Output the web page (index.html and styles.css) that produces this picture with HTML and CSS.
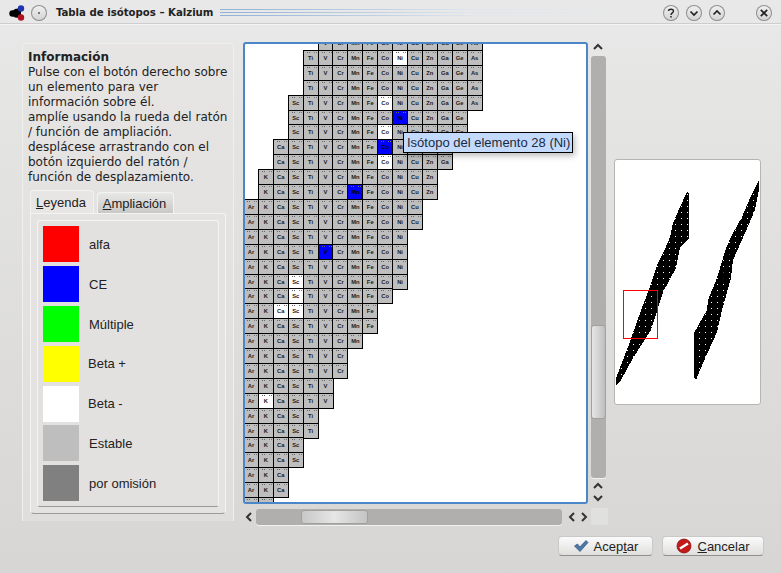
FILE: index.html
```html
<!DOCTYPE html>
<html lang="es">
<head>
<meta charset="utf-8">
<title>Tabla de isótopos – Kalzium</title>
<link rel="stylesheet" href="styles.css">
</head>
<body>
<div class="window">
  <header class="titlebar">
    <svg class="app-icon" width="18" height="18" viewBox="0 0 18 18">
      <path d="M2.5 9.5 L8 5 L14 4 L14 14 L8 13.5 Z" fill="#000"/>
      <circle cx="5.5" cy="9.5" r="3.2" fill="#000"/>
      <circle cx="14" cy="4.5" r="3.2" fill="#2233b0"/>
      <circle cx="14" cy="13.5" r="3.2" fill="#b01020"/>
    </svg>
    <span class="wbtn wbtn-menu"><svg width="16" height="16" viewBox="0 0 16 16"><circle cx="8" cy="8" r="1" fill="#555"/></svg></span>
    <h1 class="title">Tabla de isótopos – Kalzium</h1>
    <span class="title-lines"></span>
    <span class="wbtn"><svg width="16" height="16" viewBox="0 0 16 16"><path d="M5.5 6 C5.5 3.6 10.5 3.6 10.5 6 C10.5 8 8 7.8 8 10" fill="none" stroke="#222" stroke-width="1.4"/><rect x="7.3" y="11" width="1.4" height="1.6" fill="#222"/></svg></span>
    <span class="wbtn"><svg width="16" height="16" viewBox="0 0 16 16"><path d="M4.5 6.5 L8 10 L11.5 6.5" fill="none" stroke="#222" stroke-width="1.7"/></svg></span>
    <span class="wbtn"><svg width="16" height="16" viewBox="0 0 16 16"><path d="M4.5 9.5 L8 6 L11.5 9.5" fill="none" stroke="#222" stroke-width="1.7"/></svg></span>
    <span class="wbtn wbtn-close"><svg width="16" height="16" viewBox="0 0 16 16"><path d="M4.8 4.8 L11.2 11.2 M11.2 4.8 L4.8 11.2" fill="none" stroke="#222" stroke-width="1.7"/></svg></span>
  </header>

  <main class="content">
    <aside class="info-panel">
      <div class="info-text">
        <strong>Información</strong><br>
        Pulse con el botón derecho sobre<br>
        un elemento para ver<br>
        información sobre él.<br>
        amplíe usando la rueda del ratón<br>
        / función de ampliación.<br>
        desplácese arrastrando con el<br>
        botón izquierdo del ratón /<br>
        función de desplazamiento.
      </div>
      <div class="tabs">
        <span class="tab tab-active"><u>L</u>eyenda</span>
        <span class="tab"><u>A</u>mpliación</span>
      </div>
      <div class="tab-pane">
        <ul class="legend">
          <li class="legend-row"><span class="swatch sw-red"></span><span class="legend-label">alfa</span></li>
          <li class="legend-row"><span class="swatch sw-blue"></span><span class="legend-label">CE</span></li>
          <li class="legend-row"><span class="swatch sw-green"></span><span class="legend-label">Múltiple</span></li>
          <li class="legend-row"><span class="swatch sw-yellow"></span><span class="legend-label legend-label-tight">Beta +</span></li>
          <li class="legend-row legend-row-short"><span class="swatch sw-white"></span><span class="legend-label legend-label-tight">Beta -</span></li>
          <li class="legend-row"><span class="swatch sw-silver"></span><span class="legend-label">Estable</span></li>
          <li class="legend-row"><span class="swatch sw-gray"></span><span class="legend-label">por omisión</span></li>
        </ul>
      </div>
    </aside>

    <section class="table-area">
      <div class="viewport"><div id="isotopes" class="isotopes"></div></div>
      <div class="tooltip">Isótopo del elemento 28 (Ni)</div>

      <div class="vscroll">
        <svg class="arrow" width="14" height="8" viewBox="0 0 14 8"><path d="M3 6 L7 2 L11 6" fill="none" stroke="#333" stroke-width="2"/></svg>
        <div class="vgroove"><div class="vslider"></div></div>
        <div class="arrow-pair-v">
          <svg class="arrow" width="14" height="8" viewBox="0 0 14 8"><path d="M3 6 L7 2 L11 6" fill="none" stroke="#333" stroke-width="2"/></svg>
          <svg class="arrow" width="14" height="8" viewBox="0 0 14 8"><path d="M3 2 L7 6 L11 2" fill="none" stroke="#333" stroke-width="2"/></svg>
        </div>
      </div>

      <div class="hscroll">
        <svg class="arrow" width="8" height="14" viewBox="0 0 8 14"><path d="M6 3 L2 7 L6 11" fill="none" stroke="#333" stroke-width="2"/></svg>
        <div class="hgroove"><div class="hslider"></div></div>
        <div class="arrow-pair-h">
          <svg class="arrow" width="8" height="14" viewBox="0 0 8 14"><path d="M6 3 L2 7 L6 11" fill="none" stroke="#333" stroke-width="2"/></svg>
          <svg class="arrow" width="8" height="14" viewBox="0 0 8 14"><path d="M2 3 L6 7 L2 11" fill="none" stroke="#333" stroke-width="2"/></svg>
        </div>
      </div>
      <div class="corner"></div>
    </section>

    <figure class="preview">
      <svg class="minimap" width="143" height="242" viewBox="616 161 143 242" shape-rendering="crispEdges">
        <defs>
          <pattern id="dots" patternUnits="userSpaceOnUse" x="3" y="2" width="6" height="6">
            <rect width="1" height="1" fill="#fff"/>
          </pattern>
          <polygon id="left" points="687,192 689,193 689,238 680,248 676,268 663,292 651,330 633,358 621,380 616,386 616,378 628,347 640,313 650,287 658,263 665,249 670,237 673,223 680,207"/>
          <polygon id="right" points="759,180 759,190 755,210 745,233 733,260 731,278 722,310 717,332 703,363 696,380 694,378 694,333 707,310 708,300 717,278 726,248 733,233 742,217 750,198"/>
        </defs>
        <use href="#left" fill="#000"/>
        <use href="#right" fill="#000"/>
        <use href="#left" fill="url(#dots)"/>
        <use href="#right" fill="url(#dots)"/>
        <rect x="729" y="254" width="1" height="1" fill="#f00"/>
        <rect x="723" y="272" width="1" height="1" fill="#f00"/>
        <rect x="723" y="278" width="1" height="1" fill="#00f"/>
        <path d="M623 290h35v49h-35z M624 291v47h33v-47z" fill="#ff0000" fill-rule="evenodd"/>
      </svg>
    </figure>
  </main>

  <footer class="footer">
    <button class="btn btn-ok" type="button">
      <svg width="16" height="16" viewBox="0 0 16 16"><path d="M1.5 8 L4.5 6 L6.8 9 L13 2.5 L15 4.5 L7 13.5 Z" fill="#4d78a8" stroke="#2c4f78" stroke-width=".7"/></svg>
      <span>Acep<u>t</u>ar</span>
    </button>
    <button class="btn btn-cancel" type="button">
      <svg width="16" height="16" viewBox="0 0 16 16"><circle cx="8" cy="8" r="7" fill="#c21a1a" stroke="#8a1010" stroke-width=".8"/><path d="M4 10.5 L12 5.5" stroke="#fff" stroke-width="2.6"/></svg>
      <span><u>C</u>ancelar</span>
    </button>
  </footer>
</div>
<script src="script.js"></script>
</body>
</html>
```
FILE: styles.css
```css
* { box-sizing: border-box; }
html, body { margin: 0; padding: 0; }
body { width: 781px; height: 573px; overflow: hidden; }

.window {
  width: 781px;
  height: 573px;
  display: flex;
  flex-direction: column;
  background: linear-gradient(#e9e9e9 0, #e4e4e3 120px, #d7d6d5 100%);
  font-family: "Liberation Sans", Arial, sans-serif;
  font-size: 13px;
  color: #222;
}

/* Title bar */
.titlebar {
  height: 24px;
  flex: none;
  display: flex;
  align-items: center;
  padding: 2px 9px 0 7px;
  background: #e8e8e8;
  border-bottom: 1px solid #cdcdcd;
  box-shadow: 0 1px 0 #f4f4f4;
  border-radius: 4px 4px 0 0;
}
.app-icon { flex: none; margin-right: 5px; }
.wbtn {
  width: 16px;
  height: 16px;
  flex: none;
  border-radius: 50%;
  background: linear-gradient(#f2f2f2, #d2d2d2);
  box-shadow: inset 0 0 0 1px #8f8f8f;
  margin-left: 7px;
  display: block;
}
.wbtn svg { display: block; }
.wbtn-menu { margin-left: 1px; }
.wbtn-close { margin-left: 31px; }
.title {
  margin: 0 0 0 9px;
  font-family: "DejaVu Sans", sans-serif;
  font-size: 11.3px;
  font-stretch: condensed;
  font-weight: bold;
  color: #222;
  white-space: nowrap;
}
.title-lines {
  flex: 1;
  height: 7px;
  margin: 0 12px 0 7px;
  background:
    linear-gradient(90deg, #8fb0d8, #dfe6ee 60%, #e8e8e8 95%) 0 0 / 100% 1px no-repeat,
    linear-gradient(90deg, #8fb0d8, #dfe6ee 60%, #e8e8e8 95%) 0 3px / 100% 1px no-repeat,
    linear-gradient(90deg, #8fb0d8, #dfe6ee 60%, #e8e8e8 95%) 0 6px / 100% 1px no-repeat;
}

/* Main columns */
.content {
  flex: none;
  height: 498px;
  padding: 18px 0 0 22px;
  display: flex;
  align-items: flex-start;
}

/* Left panel */
.info-panel {
  width: 212px;
  height: 478px;
  margin-top: 1px;
  flex: none;
  padding: 6px 8px 0 8px;
  border: 1px solid #f0f0ef;
  border-bottom: 0;
  border-radius: 4px 4px 0 0;
  background: linear-gradient(#e6e5e4, #dfdedd);
}
.info-text {
  margin-left: -3px;
  width: 206px;
  font-family: "DejaVu Sans", sans-serif;
  font-size: 12px;
  line-height: 15px;
  white-space: nowrap;
}
.tabs {
  display: flex;
  align-items: flex-end;
  height: 23px;
  margin: 5px 0 0 -1px;
  gap: 3px;
}
.tab {
  height: 21px;
  width: 77px;
  padding: 3px 2px 0 0;
  text-align: center;
  border: 1px solid #f3f3f2;
  border-bottom: 0;
  border-radius: 4px 4px 0 0;
  background: linear-gradient(#e8e8e7, #c9c8c7);
}
.tab-active {
  height: 23px;
  width: 64px;
  padding-top: 4px;
  background: #e7e6e5;
}
.tab-pane {
  width: 196px;
  height: 301px;
  margin-left: -1px;
  padding: 6px;
  border: 1px solid #f3f3f2;
  border-bottom: 1px solid #9a9a9a;
  border-radius: 0 3px 4px 4px;
  background: #e4e3e2;
}
.legend {
  list-style: none;
  margin: 0;
  height: 287px;
  padding: 5px 0 0 5px;
  border: 1px solid #f5f5f4;
  border-bottom: 1px solid #9a9a9a;
  border-radius: 3px;
  background: #e2e1e0;
}
.legend-row {
  height: 40px;
  display: flex;
  align-items: flex-start;
  gap: 10px;
}
.legend-row-short { height: 39px; }
.swatch { width: 36px; height: 36px; flex: none; }
.legend-label { padding-top: 11px; line-height: 16px; }
.legend-label-tight { margin-left: -1px; padding-top: 10px; }
.sw-red { background: #f00; }
.sw-blue { background: #00f; }
.sw-green { background: #0f0; }
.sw-yellow { background: #ff0; }
.sw-white { background: #fff; }
.sw-silver { background: #bebebe; }
.sw-gray { background: #808080; }

/* Table and scroll bars */
.table-area {
  position: relative;
  flex: none;
  width: 366px;
  margin-left: 9px;
  display: grid;
  grid-template-columns: 345px 21px;
  grid-template-rows: 462px 21px;
}
.viewport {
  overflow: hidden;
  border: 2px solid #4a86c8;
  border-radius: 3px;
  background: #fff;
}
.isotopes {
  display: grid;
  grid-template-columns: repeat(16, 14.92px);
  grid-auto-rows: 14.92px;
  margin: -9px 0 0 -2px;
  font-family: "Liberation Sans", sans-serif;
}
.cell {
  width: 16px;
  height: 16px;
  border: 1px solid #000;
  padding-top: 4px;
  font-size: 5.8px;
  line-height: 7px;
  font-weight: bold;
  text-align: center;
  color: #1a1a1a;
  background-color: #bebebe;
  background-image:
    linear-gradient(#666, #666), linear-gradient(#666, #666),
    linear-gradient(#777, #777), linear-gradient(#777, #777);
  background-size: 1px 1px;
  background-repeat: no-repeat;
  background-position: 3px 1px, 5px 1px, 10px 1px, 12px 1px;
}
.cell-white { background-color: #fff; }
.cell-blue { background-color: #00f; color: #000; }

.tooltip {
  position: absolute;
  left: 160px;
  top: 90px;
  width: 170px;
  height: 21px;
  border: 1px solid #000;
  background: #c3dafc;
  color: #1b2a3c;
  line-height: 20px;
  padding-left: 3px;
  white-space: nowrap;
  box-shadow: 2px 3px 6px rgba(0, 0, 0, .25);
}

.arrow { display: block; flex: none; }
.vscroll {
  display: flex;
  flex-direction: column;
  align-items: center;
  padding: 0 3px 0 2px;
}
.vscroll > .arrow { margin-top: 1px; }
.vgroove {
  width: 15px;
  height: 422px;
  margin-top: 5px;
  flex: none;
  padding-top: 269px;
  border-radius: 3px;
  background: #b0afae;
  box-shadow: 0 1px 0 #f2f2f2;
}
.vslider {
  height: 94px;
  border-radius: 3px;
  border: 1px solid #a0a0a0;
  background: linear-gradient(90deg, #e6e6e6, #cfcfcf 60%, #bdbdbd);
}
.arrow-pair-v { display: flex; flex-direction: column; gap: 4px; margin-top: 4px; }

.hscroll {
  display: flex;
  align-items: center;
  padding: 4px 0 0 2px;
}
.hscroll > .arrow { margin-right: 3px; }
.hgroove {
  width: 306px;
  height: 16px;
  flex: none;
  padding-left: 45px;
  padding-top: 1px;
  border-radius: 3px;
  background: #b0afae;
  box-shadow: 0 1px 0 #f2f2f2;
}
.hslider {
  width: 67px;
  height: 14px;
  border-radius: 3px;
  border: 1px solid #a0a0a0;
  background: linear-gradient(90deg, #c8c8c8, #e6e6e6 50%, #c4c4c4);
}
.arrow-pair-h { display: flex; gap: 4px; margin-left: 6px; }
.corner {
  width: 17px;
  height: 17px;
  margin: 4px 0 0 3px;
  background: #e0e0df;
}

/* Preview */
.preview {
  width: 147px;
  height: 246px;
  margin: 117px 0 0 5px;
  flex: none;
  padding: 1px;
  border: 1px solid #b5b5b5;
  border-radius: 3px;
  background: #fff;
  overflow: hidden;
}
.minimap { display: block; }

/* Footer */
.footer {
  flex: none;
  display: flex;
  justify-content: flex-end;
  gap: 9px;
  padding: 14px 17px 0 0;
}
.btn {
  height: 20px;
  padding: 0;
  display: flex;
  align-items: center;
  justify-content: center;
  gap: 5px;
  font: inherit;
  color: #222;
  border: 1px solid #c9c9c8;
  border-bottom-color: #8f8f8f;
  border-radius: 4px;
  background: linear-gradient(#fbfbfb, #dfdfde);
}
.btn-ok { width: 95px; }
.btn-cancel { width: 102px; }
```
FILE: script.js
```js
var SYMBOLS = ["Ar", "K", "Ca", "Sc", "Ti", "V", "Cr", "Mn", "Fe", "Co", "Ni", "Cu", "Zn", "Ga", "Ge", "As"];

// One entry per row: first column, last column, highlighted cells { column: kind }.
var ROWS = [
  [5, 15], [4, 15, { 10: "white" }], [4, 15], [4, 15],
  [3, 15, { 9: "white" }], [3, 14, { 10: "blue" }], [3, 14, { 9: "white" }],
  [2, 13, { 9: "blue" }], [2, 13, { 9: "white" }],
  [1, 12], [1, 12, { 7: "blue" }],
  [0, 11], [0, 11], [0, 10], [0, 10, { 5: "blue" }], [0, 10],
  [0, 10, { 3: "white" }], [0, 9, { 3: "white" }], [0, 8, { 2: "white", 3: "white" }],
  [0, 8], [0, 7], [0, 6], [0, 6], [0, 5], [0, 5, { 1: "white" }],
  [0, 4], [0, 4], [0, 3], [0, 3], [0, 2], [0, 2], [0, 1]
];

var table = document.getElementById("isotopes");
ROWS.forEach(function (row, r) {
  for (var c = row[0]; c <= row[1]; c++) {
    var cell = document.createElement("div");
    var kind = row[2] && row[2][c];
    cell.className = kind ? "cell cell-" + kind : "cell";
    cell.style.gridRow = String(r + 1);
    cell.style.gridColumn = String(c + 1);
    cell.textContent = SYMBOLS[c];
    table.appendChild(cell);
  }
});
```
